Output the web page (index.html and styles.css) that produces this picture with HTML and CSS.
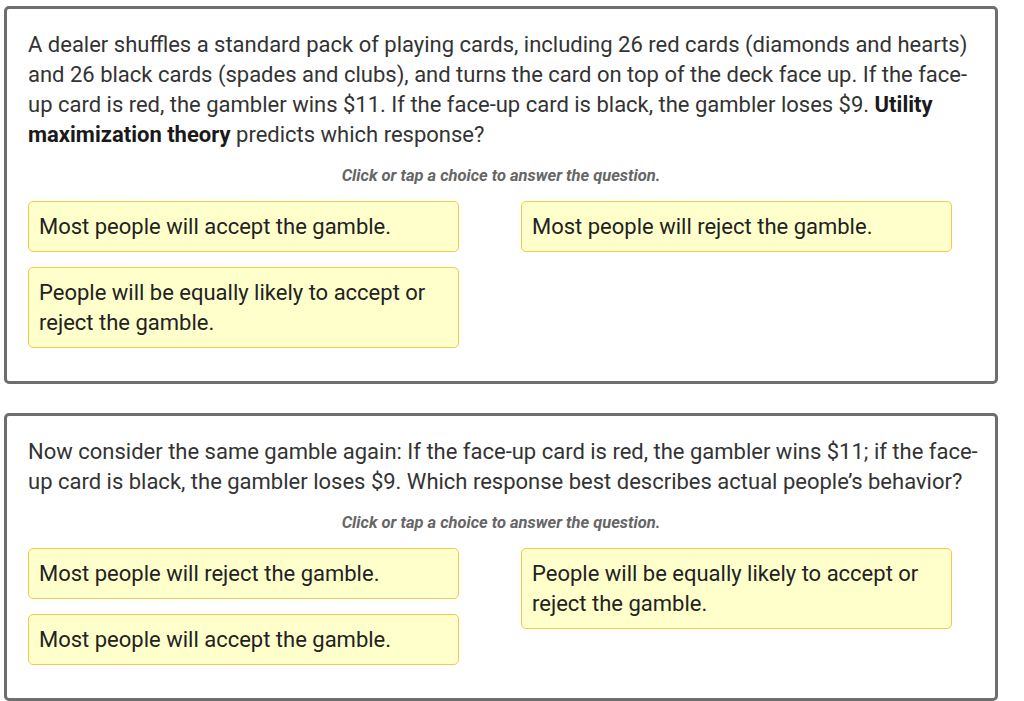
FILE: index.html
```html
<!DOCTYPE html>
<html lang="en">
<head>
<meta charset="utf-8">
<title>Questions</title>
<link rel="stylesheet" href="styles.css">
</head>
<body>
<main class="page">
  <section class="card">
    <p class="prompt">A dealer shuffles a standard pack of playing cards, including 26 red cards (diamonds and hearts) and 26 black cards (spades and clubs), and turns the card on top of the deck face up. If the face-up card is red, the gambler wins $11. If the face-up card is black, the gambler loses $9. <strong>Utility</strong> <strong>maximization theory</strong> predicts which response?</p>
    <p class="hint">Click or tap a choice to answer the question.</p>
    <div class="choices">
      <div class="col">
        <button class="choice">Most people will accept the gamble.</button>
        <button class="choice">People will be equally likely to accept or reject the gamble.</button>
      </div>
      <div class="col">
        <button class="choice">Most people will reject the gamble.</button>
      </div>
    </div>
  </section>
  <section class="card">
    <p class="prompt">Now consider the same gamble again: If the face-up card is red, the gambler wins $11; if the face-up card is black, the gambler loses $9. Which response best describes actual people’s behavior?</p>
    <p class="hint">Click or tap a choice to answer the question.</p>
    <div class="choices">
      <div class="col">
        <button class="choice">Most people will reject the gamble.</button>
        <button class="choice">Most people will accept the gamble.</button>
      </div>
      <div class="col">
        <button class="choice">People will be equally likely to accept or reject the gamble.</button>
      </div>
    </div>
  </section>
</main>
</body>
</html>
```
FILE: styles.css
```css
* { box-sizing: border-box; }

html, body {
  margin: 0;
  background: #ffffff;
}

body {
  font-family: Roboto, "Liberation Sans", sans-serif;
  color: #333;
}

.page {
  padding: 6px 0 0 4px;
  display: flex;
  flex-direction: column;
  gap: 29px;
}

.card {
  width: 994px;
  border: 3px solid #6e6e6e;
  border-radius: 5px;
  padding: 21px 21px 33px 21px;
  background: #fff;
}

.prompt {
  margin: 0 -10px 0 0;
  font-size: 22px;
  line-height: 30px;
}

.prompt strong {
  font-weight: 700;
  color: #1a1a1a;
}

.hint {
  margin: 15px 0;
  text-align: center;
  font-size: 16.5px;
  line-height: 21px;
  font-style: italic;
  font-weight: 700;
  color: #666;
}

.choices {
  display: flex;
  gap: 62px;
  align-items: flex-start;
}

.col {
  width: 431px;
  display: flex;
  flex-direction: column;
  gap: 15px;
}

.choice {
  display: block;
  width: 100%;
  margin: 0;
  padding: 9.5px 10px 9.5px 10px;
  text-align: left;
  font-family: inherit;
  font-size: 22px;
  line-height: 30px;
  color: #222;
  background: #ffffcc;
  border: 1px solid #f5c945;
  border-radius: 5px;
  cursor: pointer;
}
```
